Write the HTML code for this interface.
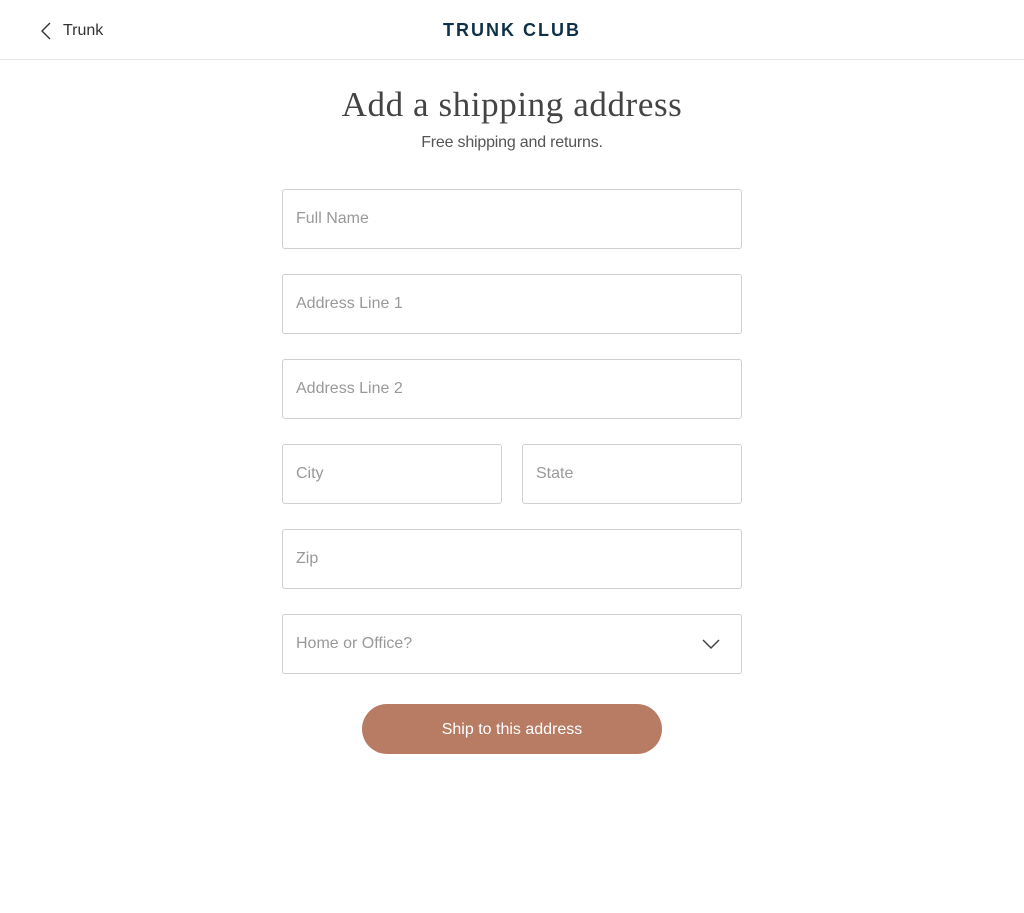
<!DOCTYPE html>
<html><head><meta charset="utf-8"><style>
*{box-sizing:border-box;margin:0;padding:0}
body{width:1024px;height:913px;background:#fff;font-family:"Liberation Sans",sans-serif;position:relative;overflow:hidden}
.hdr{position:absolute;top:0;left:0;width:1024px;height:60px;border-bottom:1px solid #e3e3e3}
.back{position:absolute;left:40px;top:21px;font-size:16px;color:#333;display:flex;align-items:center}
.back svg{margin-right:11px}
.logo{position:absolute;left:0;width:1024px;top:20px;text-align:center;font-weight:bold;font-size:18px;letter-spacing:2px;color:#0f3148}
h1{position:absolute;top:85px;width:1024px;text-align:center;font-family:"Liberation Serif",serif;font-weight:normal;font-size:35px;letter-spacing:0.6px;color:#444}
.sub{position:absolute;top:134px;width:1024px;text-align:center;font-size:16px;letter-spacing:-0.2px;color:#555}
.f{position:absolute;height:60px;border:1px solid #cfcfcf;border-radius:3px;font-size:16px;color:#999;padding-left:13px;line-height:58px}
.btn{position:absolute;left:362px;top:704px;width:300px;height:50px;border-radius:25px;background:#b87c64;color:#fff;text-align:center;line-height:52px;font-size:16px}
</style></head><body>
<div class="hdr">
<div class="back"><svg width="12" height="20" viewBox="0 0 12 20"><path d="M10 2 L2 10 L10 18" fill="none" stroke="#333" stroke-width="1.4"/></svg>Trunk</div>
<div class="logo">TRUNK CLUB</div>
</div>
<h1>Add a shipping address</h1>
<div class="sub">Free shipping and returns.</div>
<div class="f" style="left:282px;top:189px;width:460px">Full Name</div>
<div class="f" style="left:282px;top:274px;width:460px">Address Line 1</div>
<div class="f" style="left:282px;top:359px;width:460px">Address Line 2</div>
<div class="f" style="left:282px;top:444px;width:220px">City</div>
<div class="f" style="left:522px;top:444px;width:220px">State</div>
<div class="f" style="left:282px;top:529px;width:460px">Zip</div>
<div class="f" style="left:282px;top:614px;width:460px">Home or Office?
<svg style="position:absolute;right:21px;top:23px" width="18" height="12" viewBox="0 0 18 12"><path d="M1 2 L9 10 L17 2" fill="none" stroke="#444" stroke-width="1.5"/></svg></div>
<div class="btn">Ship to this address</div>
</body></html>
